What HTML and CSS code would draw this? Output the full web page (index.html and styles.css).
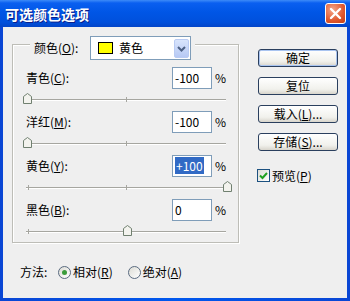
FILE: index.html
```html
<!DOCTYPE html>
<html lang="zh-CN">
<head>
    <meta charset="UTF-8">
    <title>可选颜色选项</title>
    <link rel="stylesheet" href="styles.css">
</head>
<body>
    <div class="window">
        <div class="titlebar">
            <span class="title">可选颜色选项</span>
            <span class="close">
                <svg width="13" height="13" viewBox="0 0 13 13"><path d="M2 2 L11 11 M11 2 L2 11" stroke="#fff" stroke-width="2.4" stroke-linecap="round"/></svg>
            </span>
        </div>
        <div class="body">
            <div class="main">
                <div class="group">
                    <div class="group-head">
                        <span class="head-label">颜色(<u>O</u>):</span>
                        <div class="combo">
                            <span class="swatch"></span>
                            <span class="combo-text">黄色</span>
                            <span class="combo-btn">
                                <svg width="13" height="17" viewBox="0 0 13 17"><path d="M3 7 L6.5 10.5 L10 7" fill="none" stroke="#4d6185" stroke-width="2"/></svg>
                            </span>
                        </div>
                    </div>

                    <div class="field first">
                        <span class="label">青色(<u>C</u>):</span>
                        <span class="input">-100</span>
                        <span class="pct">%</span>
                    </div>
                    <div class="slider">
                        <span class="track"></span>
                        <span class="tick tick-start"></span>
                        <span class="tick tick-mid"></span>
                        <svg class="thumb" style="left: 0%" width="9" height="11" viewBox="0 0 9 11"><path d="M0.5 3.5 L4.5 0.5 L8.5 3.5 V10.5 H0.5 Z" fill="#f3f3ee" stroke="#708070"/></svg>
                    </div>

                    <div class="field">
                        <span class="label">洋红(<u>M</u>):</span>
                        <span class="input">-100</span>
                        <span class="pct">%</span>
                    </div>
                    <div class="slider">
                        <span class="track"></span>
                        <span class="tick tick-start"></span>
                        <span class="tick tick-mid"></span>
                        <svg class="thumb" style="left: 0%" width="9" height="11" viewBox="0 0 9 11"><path d="M0.5 3.5 L4.5 0.5 L8.5 3.5 V10.5 H0.5 Z" fill="#f3f3ee" stroke="#708070"/></svg>
                    </div>

                    <div class="field">
                        <span class="label">黄色(<u>Y</u>):</span>
                        <span class="input"><span class="selected">+100</span></span>
                        <span class="pct">%</span>
                    </div>
                    <div class="slider">
                        <span class="track"></span>
                        <span class="tick tick-start"></span>
                        <span class="tick tick-mid"></span>
                        <svg class="thumb" style="left: 100%" width="9" height="11" viewBox="0 0 9 11"><path d="M0.5 3.5 L4.5 0.5 L8.5 3.5 V10.5 H0.5 Z" fill="#f3f3ee" stroke="#708070"/></svg>
                    </div>

                    <div class="field">
                        <span class="label">黑色(<u>B</u>):</span>
                        <span class="input">0</span>
                        <span class="pct">%</span>
                    </div>
                    <div class="slider">
                        <span class="track"></span>
                        <span class="tick tick-start"></span>
                        <span class="tick tick-mid"></span>
                        <svg class="thumb" style="left: 50%" width="9" height="11" viewBox="0 0 9 11"><path d="M0.5 3.5 L4.5 0.5 L8.5 3.5 V10.5 H0.5 Z" fill="#f3f3ee" stroke="#708070"/></svg>
                    </div>
                </div>

                <div class="method">
                    <span class="method-label">方法:</span>
                    <span class="radio checked"></span>
                    <span class="radio-label">相对(<u>R</u>)</span>
                    <span class="radio"></span>
                    <span class="radio-label">绝对(<u>A</u>)</span>
                </div>
            </div>

            <div class="side">
                <div class="btn default">确定</div>
                <div class="btn">复位</div>
                <div class="btn gap">载入(<u>L</u>)...</div>
                <div class="btn">存储(<u>S</u>)...</div>
                <div class="check-row">
                    <span class="checkbox">
                        <svg width="11" height="11" viewBox="0 0 11 11"><path d="M2 5.5 L4.5 8 L9 3" fill="none" stroke="#21a121" stroke-width="2"/></svg>
                    </span>
                    <span class="check-label">预览(<u>P</u>)</span>
                </div>
            </div>
        </div>
    </div>
</body>
</html>
```

FILE: styles.css
```css
body {
    margin: 0;
    font-family: "Noto Sans CJK SC", "Liberation Sans", sans-serif;
    font-size: 12px;
    line-height: 16px;
    color: #000;
}
u {
    text-decoration: underline;
    text-underline-offset: 1px;
}
.window {
    width: 350px;
    height: 301px;
    display: flex;
    flex-direction: column;
    background: linear-gradient(90deg, #0a46d4, #0058ee 50%, #0a46d4);
}
.titlebar {
    height: 27px;
    display: flex;
    align-items: center;
    justify-content: space-between;
    padding: 0 4px 0 5px;
    background: linear-gradient(#3d8bf8 0, #0a5ff0 3px, #0056e6 12px, #0050dc 22px, #0345c8 27px);
}
.title {
    color: #fff;
    font-weight: bold;
    font-size: 14px;
    text-shadow: 1px 1px 0 #0a1f8a;
}
.close {
    width: 19px;
    height: 19px;
    border: 1px solid #fff;
    border-radius: 3px;
    display: flex;
    align-items: center;
    justify-content: center;
    background: radial-gradient(circle at 35% 30%, #f4a68a, #e0582e 60%, #c13d14);
}
.body {
    flex: 1;
    margin: 0 3px 3px;
    background: #efefef;
    display: flex;
    padding: 17px 0 0 9px;
}
.main {
    width: 227px;
}
.group {
    box-sizing: border-box;
    height: 199px;
    border: 1px solid #bdbdb7;
    box-shadow: inset 1px 1px 0 #fff, 1px 1px 0 #fff;
    padding: 0 10px 0 13px;
}
.group-head {
    display: flex;
    align-items: center;
    height: 24px;
    margin: -9px 0 0 4px;
    padding: 0 4px;
    width: fit-content;
    background: #efefef;
}
.head-label {
    width: 56px;
}
.combo {
    box-sizing: border-box;
    width: 101px;
    height: 24px;
    border: 1px solid #7f9db9;
    background: #fff;
    display: flex;
    align-items: center;
    padding: 0 1px 0 7px;
}
.swatch {
    width: 13px;
    height: 10px;
    background: #ffff00;
    border: 1px solid #000;
}
.combo-text {
    flex: 1;
    margin-left: 6px;
}
.combo-btn {
    width: 15px;
    height: 19px;
    display: flex;
    align-items: center;
    justify-content: center;
    border-radius: 2px;
    background: linear-gradient(#d8e4fc, #b7c9f4);
    border: 1px solid #b9cbf3;
    box-sizing: border-box;
}
.field {
    display: flex;
    align-items: center;
    height: 22px;
}
.field.first {
    margin-top: 7px;
}
.label {
    flex: 1;
}
.input {
    box-sizing: border-box;
    width: 40px;
    height: 22px;
    border: 1px solid #7f9db9;
    background: #fff;
    padding: 2px 0 0 2px;
}
.selected {
    display: inline-block;
    background: #316ac5;
    color: #fff;
    padding: 0 1px;
    line-height: 17px;
    margin-top: -1px;
}
.pct {
    width: 13px;
    padding-left: 3px;
}
.slider {
    position: relative;
    height: 22px;
    margin-right: 2px;
}
.track {
    position: absolute;
    left: 0;
    right: 0;
    top: 10px;
    height: 1px;
    background: #a6a6a0;
    box-shadow: 0 1px 0 #fff;
}
.tick {
    position: absolute;
    top: 8px;
    width: 1px;
    height: 5px;
    background: #a6a6a0;
}
.tick-start {
    left: 2px;
}
.tick-mid {
    left: 100px;
}
.thumb {
    position: absolute;
    top: 4px;
    margin-left: -3px;
}
.method {
    display: flex;
    align-items: center;
    height: 16px;
    margin-top: 21px;
    padding-left: 8px;
}
.method-label {
    width: 38px;
}
.radio {
    box-sizing: border-box;
    width: 13px;
    height: 13px;
    border: 1px solid #5a6b80;
    border-radius: 50%;
    background: linear-gradient(135deg, #dcdcd5, #fff);
    display: flex;
    align-items: center;
    justify-content: center;
}
.radio.checked::after {
    content: "";
    width: 5px;
    height: 5px;
    border-radius: 50%;
    background: #3a9c3a;
}
.radio-label {
    margin: 0 15px 0 2px;
}
.side {
    margin: 5px 0 0 19px;
    width: 80px;
}
.btn {
    box-sizing: border-box;
    height: 18px;
    margin-bottom: 10px;
    border: 1px solid #2a3f5e;
    border-radius: 3px;
    background: linear-gradient(#ffffff, #f1f1ec 70%, #d8d5cc);
    text-align: center;
    line-height: 16px;
}
.btn.default {
    box-shadow: inset 0 0 0 1px #a9c4f0;
}
.btn.gap {
    margin-top: 7px;
}
.check-row {
    display: flex;
    align-items: center;
    margin: 18px 0 0 -1px;
    height: 13px;
}
.checkbox {
    box-sizing: border-box;
    width: 13px;
    height: 13px;
    border: 1px solid #1c5180;
    background: linear-gradient(135deg, #dcdcd5, #fff);
    display: flex;
    align-items: center;
    justify-content: center;
}
.check-label {
    margin-left: 2px;
}
```
